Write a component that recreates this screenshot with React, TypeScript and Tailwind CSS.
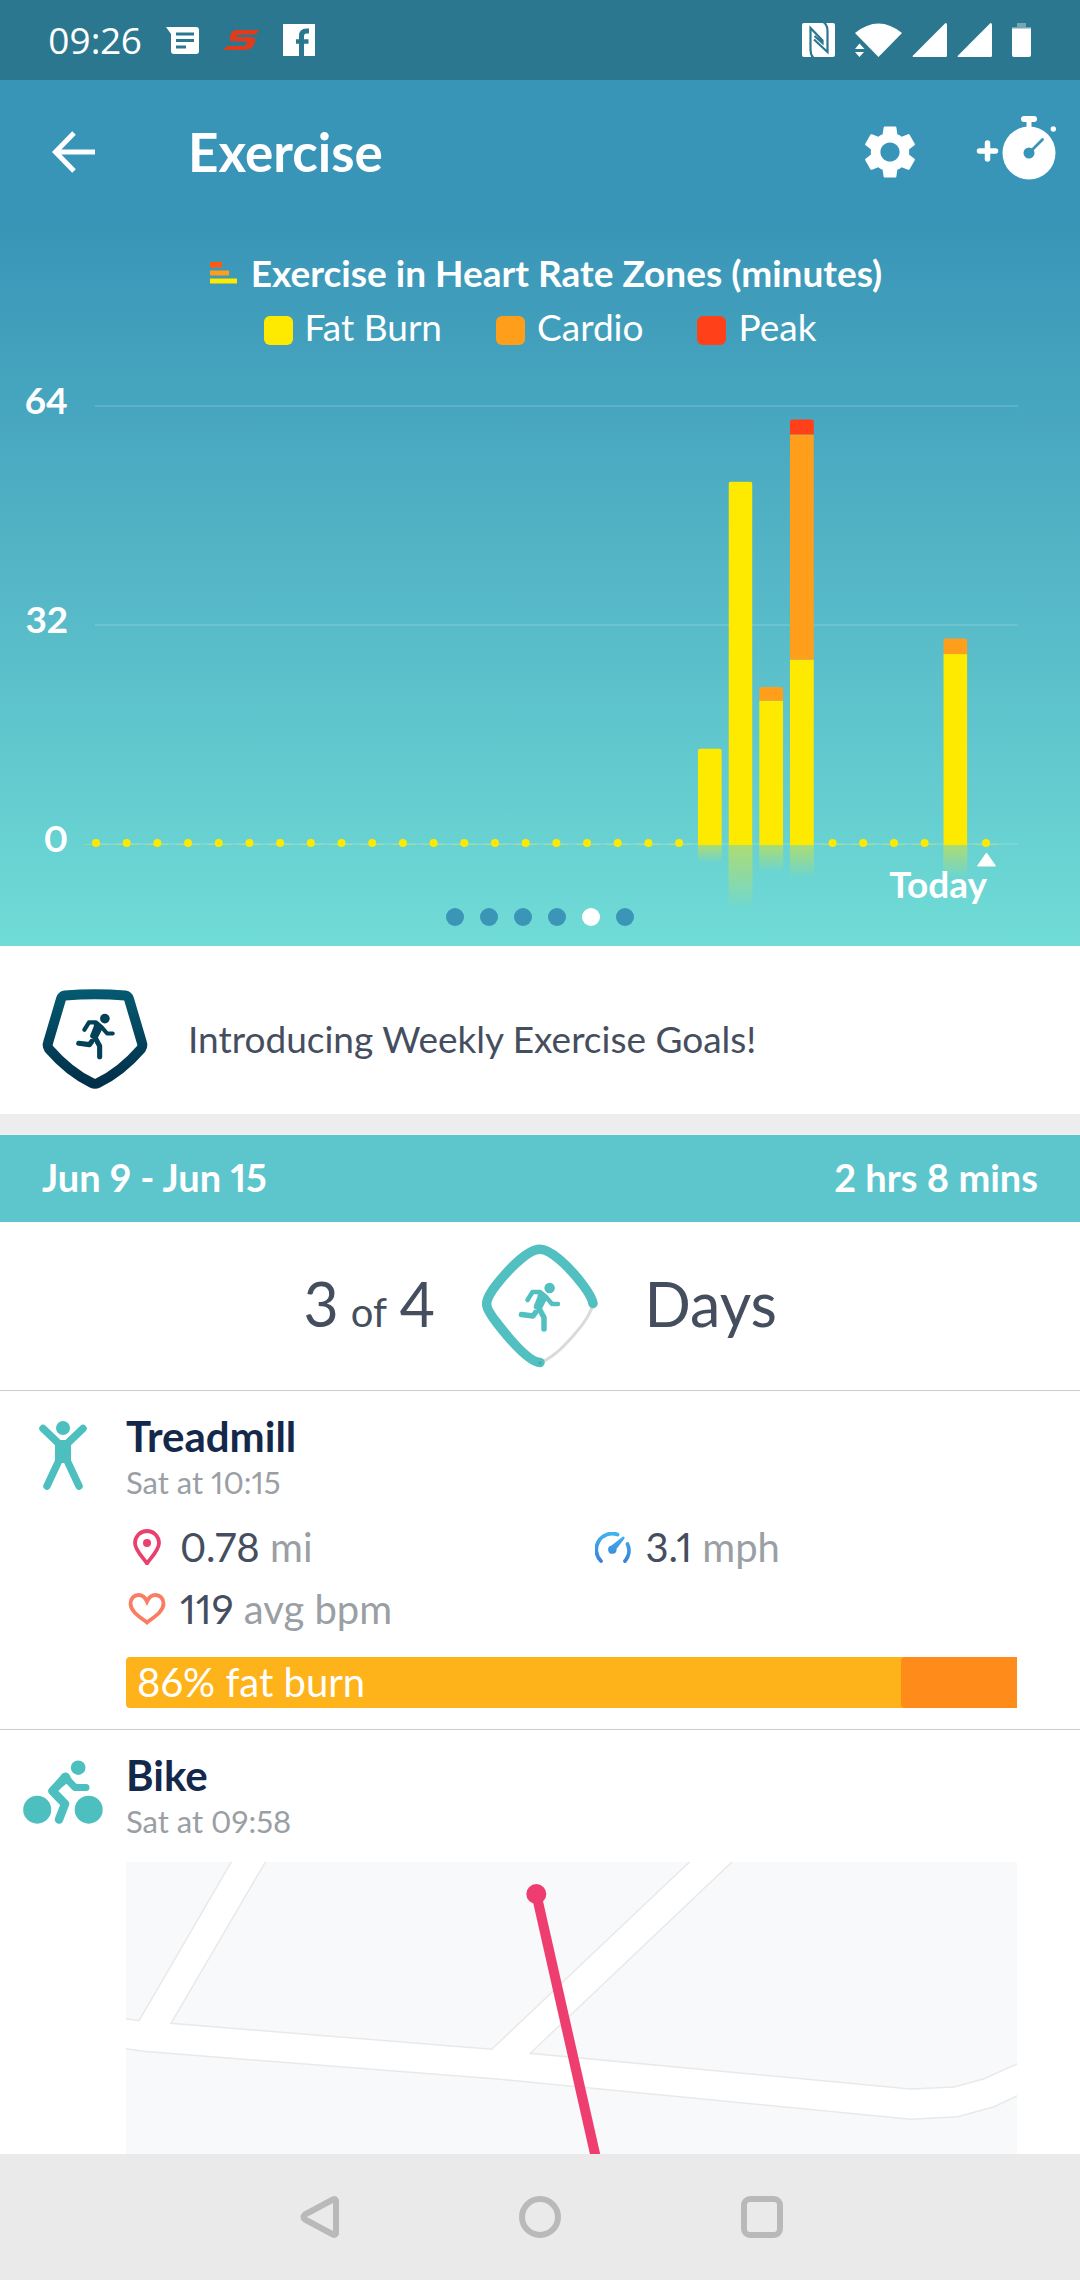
import type { ReactNode } from 'react';
import { MdSettings } from 'react-icons/md';

type Zone = 'fatBurn' | 'cardio' | 'peak';

const ZONES: { key: Zone; label: string; swatch: string; fill: string }[] = [
  { key: 'fatBurn', label: 'Fat Burn', swatch: 'bg-[#fee900]', fill: '#fee900' },
  { key: 'cardio', label: 'Cardio', swatch: 'bg-[#ff9e1b]', fill: '#ff9e1b' },
  { key: 'peak', label: 'Peak', swatch: 'bg-[#ff4019]', fill: '#ff4019' },
];

const DAY_COUNT = 30;

// minutes per zone, keyed by day index (last one is today)
const DAYS: Record<number, { fatBurn: number; cardio?: number; peak?: number; reflection: number }> = {
  20: { fatBurn: 14.1, reflection: 18 },
  21: { fatBurn: 53.1, reflection: 66 },
  22: { fatBurn: 21.1, cardio: 2, reflection: 27 },
  23: { fatBurn: 27.1, cardio: 32.9, peak: 2.2, reflection: 33 },
  28: { fatBurn: 27.9, cardio: 2.3, reflection: 33 },
};

export default function App() {
  return (
    <div className="flex min-h-screen flex-col bg-white font-['Lato',sans-serif] text-[#454e5e] proportional-nums">
      <header className="bg-[#3995b7]">
        <StatusBar />
        <Toolbar />
      </header>
      <main className="grow">
        <ZonesCard />
        <a href="#goals" className="flex h-42 items-center gap-10 px-[42px] pt-[18px]">
          <ShieldIcon />
          <span className="text-[37px] leading-12">Introducing Weekly Exercise Goals!</span>
        </a>
        <section>
          <div className="flex h-[108px] items-center justify-between border-t-[21px] border-[#ededed] bg-[#5dc5cc] px-[42px] pb-1 text-[38px] leading-12 font-bold text-white">
            <h2>Jun 9 - Jun 15</h2>
            <span>2 hrs 8 mins</span>
          </div>
          <div className="grid h-[169px] grid-cols-[1fr_auto_1fr] items-center gap-[46px] border-b border-[#cdcdcd] text-[61px] leading-16">
            <p className="flex items-baseline justify-end gap-3 pb-1">
              <span>3</span>
              <span className="text-[40px] leading-none">of</span>
              <span>4</span>
            </p>
            <GoalIcon />
            <p className="pb-1">Days</p>
          </div>
        </section>
        <Activity icon={<PersonIcon />} title="Treadmill" time="Sat at 10:15">
          <div className="grid grid-cols-2 gap-x-10 gap-y-3.5">
            <Metric icon={<PinIcon />} value="0.78" unit="mi" />
            <Metric icon={<GaugeIcon />} value="3.1" unit="mph" />
            <Metric icon={<HeartIcon />} value="119" unit="avg bpm" />
          </div>
          <div className="mt-6 flex h-[51px] overflow-hidden rounded-l-sm bg-[#ffb31a]">
            <span className="grow pl-[11px] text-[40px] leading-[51px] text-white">86% fat burn</span>
            <span className="w-[13%] rounded-l-sm bg-[#ff8c1a]" />
          </div>
        </Activity>
        <Activity icon={<BikeIcon />} title="Bike" time="Sat at 09:58" last>
          <RouteMap />
        </Activity>
      </main>
      <SystemNav />
    </div>
  );
}

function StatusBar() {
  return (
    <div className="flex h-20 items-center justify-between bg-[#2c7790] pr-[49px] pl-12 text-white">
      <div className="flex items-center">
        <span className="font-['Open_Sans',sans-serif] text-[37px] leading-12">09:26</span>
        <svg className="ml-6 h-[27px] w-[33px]" viewBox="0 0 33 27" fill="currentColor">
          <path
            fillRule="evenodd"
            d="M0 0h30a3 3 0 0 1 3 3v21a3 3 0 0 1-3 3H8a3 3 0 0 1-3-3V7zM10 5.5v3h18v-3zM10 12v3h18v-3zM10 18.500v3h10v-3z"
          />
        </svg>
        <svg className="ml-6 h-5 w-9" viewBox="0 0 36 20" fill="#e23b1b">
          <path d="M12 0h24l-3 4.500H17.500q-4 0-5 2.500H24c8 0 10 2 7.500 6.500C29.500 18 26 20 21 20H0l4.500-4h14.500c4 0 7-4.500 3-4.500H10c-3 0-4-1.500-3-4.500C8 3 9 1.500 12 0z" />
        </svg>
        <svg className="ml-6 h-8 w-8" viewBox="0 0 32 32">
          <path fill="currentColor" d="M0 0h32v32H0z" />
          <path fill="none" stroke="#2c7790" strokeWidth="5" d="M18.500 32V12q0-5 5-5h2.500" />
          <path fill="none" stroke="#2c7790" strokeWidth="4.500" d="M13 17.500h12.500" />
        </svg>
      </div>
      <div className="flex items-center">
        <svg className="h-[34px] w-[33px]" viewBox="0 0 33 34">
          <rect width="33" height="34" rx="2" fill="currentColor" />
          <g fill="none" stroke="#2c7790" strokeWidth="2.200">
            <path d="M11.500 35q-3-3-3-8V5l12 12.500v2.500l-8-7" />
            <path d="M21.500 -1q4 3 4 9v21L12 16.500" />
          </g>
        </svg>
        <svg className="ml-5 h-[34px] w-[47px]" viewBox="0 0 47 34" fill="currentColor">
          <path d="M0 10Q23.500-9 47 10L23.500 34zM4.500 20.500l5 5.500H0zM0 29h9l-4.500 5z" />
        </svg>
        <SignalIcon />
        <SignalIcon />
        <svg className="ml-5 h-[34px] w-[19px]" viewBox="0 0 19 34" fill="currentColor">
          <path opacity=".35" d="M5 0h9v4h5v3H0V4h5z" />
          <path d="M0 5.500h19V32a2 2 0 0 1-2 2H2a2 2 0 0 1-2-2z" />
        </svg>
      </div>
    </div>
  );
}

function SignalIcon() {
  return (
    <svg className="ml-2.5 h-[34px] w-[35px]" viewBox="0 0 35 34" fill="currentColor">
      <path d="M33.500 0Q35 0 35 1.500V32.500Q35 34 33.500 34H1.500Q0 34 .8 32.800z" />
    </svg>
  );
}

function Toolbar() {
  return (
    <div className="flex h-36 items-center pr-6 pl-[52px] text-white">
      <button type="button" aria-label="Back">
        <svg className="h-[42px] w-11" viewBox="0 0 44 42" fill="none" stroke="currentColor" strokeWidth="5">
          <path d="M22 2L3.500 21 22 40M3.500 21H43" />
        </svg>
      </button>
      <h1 className="ml-[92px] grow text-[53px] leading-16 font-bold">Exercise</h1>
      <button type="button" aria-label="Settings">
        <MdSettings className="h-16 w-16" />
      </button>
      <button type="button" aria-label="Add exercise" className="ml-[54px]">
        <svg className="-mt-2 h-16 w-20" viewBox="0 0 80 64">
          <path d="M3.500 35h16M11.500 27v16" fill="none" stroke="currentColor" strokeWidth="5.500" strokeLinecap="round" />
          <g fill="currentColor">
            <rect x="45" y="0" width="16" height="6" rx="3" />
            <path d="M50.500 4h5v10h-5z" />
            <circle cx="53" cy="37" r="26.500" />
            <circle cx="77.300" cy="13" r="2.700" />
          </g>
          <circle cx="53" cy="37" r="5.500" fill="#3995b7" />
          <path d="M53 37l13.500-13.500" stroke="#3995b7" strokeWidth="2.800" strokeLinecap="round" />
        </svg>
      </button>
    </div>
  );
}

function ZonesCard() {
  return (
    <section className="bg-linear-to-b from-[#3995b7] via-[#55b7c7] to-[#70dcd6] pt-[25px] pb-5 text-white">
      <div className="flex items-center justify-center gap-3.5 pl-3">
        <svg className="h-[22px] w-[27px]" viewBox="0 0 27 22">
          <path fill="#ff5a10" d="M0 0h12v5.500H0z" />
          <path fill="#ff9e1b" d="M0 8.500h19v5H0z" />
          <path fill="#fee900" d="M0 16.500h27v5H0z" />
        </svg>
        <h2 className="text-[37px] leading-12 font-bold">Exercise in Heart Rate Zones (minutes)</h2>
      </div>
      <ul className="mt-1.5 flex justify-center gap-[54px] text-[37px] leading-12">
        {ZONES.map((zone) => (
          <li key={zone.key} className="flex items-center gap-3">
            <span className={`mt-1.5 size-[29px] rounded-md ${zone.swatch}`} />
            {zone.label}
          </li>
        ))}
      </ul>
      <ZonesChart />
      <div className="flex justify-center gap-4">
        {[0, 1, 2, 3, 4, 5].map((page) => (
          <button
            key={page}
            type="button"
            aria-label={`Page ${page + 1}`}
            className={`size-[18px] rounded-full ${page === 4 ? 'bg-white' : 'bg-[#3a95b7]'}`}
          />
        ))}
      </div>
    </section>
  );
}

function ZonesChart() {
  const base = 494;
  const scale = 438 / 64;

  return (
    <svg className="block w-full" viewBox="0 0 1080 557" role="img" aria-label="Minutes per day">
      <defs>
        <linearGradient id="reflection" x1="0" y1="0" x2="0" y2="1">
          <stop offset="0" stopColor="#fee900" stopOpacity=".45" />
          <stop offset="1" stopColor="#fee900" stopOpacity="0" />
        </linearGradient>
      </defs>
      {[64, 32, 0].map((tick) => (
        <g key={tick}>
          <path d={`M95 ${base - tick * scale - 1}H1018`} stroke="#fff" strokeOpacity=".13" strokeWidth="2" />
          <text x="68" y={base + 7 - tick * scale} textAnchor="end" fontSize="37" fontWeight="700" fill="#fff">
            {tick}
          </text>
        </g>
      ))}
      {Array.from({ length: DAY_COUNT }, (_, i) => {
        const x = 96 + i * 30.69;
        const day = DAYS[i];
        if (!day) {
          return (
            <g key={i} fill="#fee900">
              <rect x={x - 12} y={base - 1} width="24" height="1" opacity=".35" />
              <circle cx={x} cy={base - 2} r="4" />
            </g>
          );
        }
        const total = day.fatBurn + (day.cardio ?? 0) + (day.peak ?? 0);
        const top = base - total * scale;
        let y = base;
        return (
          <g key={i}>
            <clipPath id={`bar-${i}`}>
              <path d={`M${x - 12} ${base}V${top + 3}q0-3 3-3h18q3 0 3 3V${base}z`} />
            </clipPath>
            <g clipPath={`url(#bar-${i})`}>
              {ZONES.map((zone) => {
                const height = (day[zone.key] ?? 0) * scale;
                y -= height;
                return <rect key={zone.key} x={x - 12} y={y} width="24" height={height} fill={zone.fill} />;
              })}
            </g>
            <rect x={x - 12} y={base} width="24" height={day.reflection} fill="url(#reflection)" />
          </g>
        );
      })}
      <path d="M986.500 502l9 13h-18z" fill="#fff" stroke="#fff" strokeLinejoin="round" />
      <text x="987" y="547" textAnchor="end" fontSize="37" fontWeight="700" fill="#fff">
        Today
      </text>
    </svg>
  );
}

type ActivityProps = {
  icon: ReactNode;
  title: string;
  time: string;
  last?: boolean;
  children: ReactNode;
};

function Activity({ icon, title, time, last, children }: ActivityProps) {
  return (
    <article className={`flex pt-[21px] pr-[63px] ${last ? '' : 'border-b border-[#cdcdcd] pb-[21px]'}`}>
      <div className="flex w-[126px] shrink-0 justify-center pt-[9px]">{icon}</div>
      <div className="min-w-0 grow">
        <h3 className="text-[42px] leading-12 font-bold text-[#14284b]">{title}</h3>
        <p className="mt-0.5 mb-[21px] text-[31px] leading-10 text-[#9a9fa5]">{time}</p>
        {children}
      </div>
    </article>
  );
}

function Metric({ icon, value, unit }: { icon: ReactNode; value: string; unit: string }) {
  return (
    <div className="flex items-center text-[40px] leading-12">
      <span className="mr-3 flex w-[42px] justify-center">{icon}</span>
      <p>
        {value} <span className="text-[#9a9fa5]">{unit}</span>
      </p>
    </div>
  );
}

function Runner() {
  return (
    <g fill="none" stroke="currentColor" strokeWidth="5.500" strokeLinecap="round" strokeLinejoin="round">
      <circle cx="67.600" cy="44" r="5.200" fill="currentColor" stroke="none" />
      <path d="M45.500 56l5-8h7.500l6 5 6 7h6" strokeWidth="4.500" />
      <path d="M58.500 50.500l4 3.500-5 9.500-3-1 4-10z" fill="currentColor" />
      <path d="M56.500 63.500l5.500 10v11.500" />
      <path d="M39.500 70.500l11.500 1.500 2.500-3.500" />
    </g>
  );
}

function ShieldIcon() {
  return (
    <svg className="h-[100px] w-[106px] text-[#034159]" viewBox="0 0 106 100">
      <defs>
        <linearGradient id="shield" x1="0" y1="0" x2="0" y2="1">
          <stop offset="0" stopColor="#04586f" />
          <stop offset="1" stopColor="#022f49" />
        </linearGradient>
      </defs>
      <path
        d="M23 6.500Q53 4 83 6.500Q86 7 87 10L100 54Q101 57 99 60Q79 83 56 94Q53 95.500 50 94Q27 83 7 60Q5 57 6 54L19 10Q20 7 23 6.500z"
        fill="none"
        stroke="url(#shield)"
        strokeWidth="10"
      />
      <g transform="translate(0 -11.300) scale(.93)">
        <Runner />
      </g>
    </svg>
  );
}

function GoalIcon() {
  return (
    <svg className="h-[124px] w-[117px] text-[#52bfc0]" viewBox="0 0 117 124">
      <path d="M111 60Q108 73 91 92Q72 114 58 118.500" fill="none" stroke="#dadada" strokeWidth="3" />
      <path
        d="M58 118.500C48 118 32 101 15 79Q4.600 66 4.600 60Q4.600 53 15 40C32 19 48 5.300 58 5.300C68 5.300 86 21 101 41Q110 53 111 59.500"
        fill="none"
        stroke="currentColor"
        strokeWidth="9.500"
        strokeLinecap="round"
      />
      <circle cx="58" cy="119" r="1.500" fill="#45aaac" />
      <Runner />
    </svg>
  );
}

function PersonIcon() {
  return (
    <svg className="h-[69px] w-12 text-[#4ebfbf]" viewBox="0 0 48 69">
      <circle cx="24" cy="7" r="7" fill="currentColor" />
      <path d="M16 22l4-3h8l4 3v20H16z" fill="currentColor" />
      <g fill="none" stroke="currentColor" strokeWidth="7.500" strokeLinecap="round" strokeLinejoin="round">
        <path d="M4 7.500l15.700 15V40L8 65" />
        <path d="M44 7.500l-15.700 15V40L40 65" />
      </g>
    </svg>
  );
}

function BikeIcon() {
  return (
    <svg className="h-16 w-20 text-[#4ebfbf]" viewBox="0 0 80 64">
      <g fill="currentColor">
        <circle cx="14.200" cy="49.700" r="14" />
        <circle cx="65.700" cy="49.700" r="14" />
        <circle cx="55.200" cy="7.700" r="7.300" />
        <path d="M25.500 31L39 14q4-3 7 0l3 6-10 7z" />
      </g>
      <g fill="none" stroke="currentColor" strokeLinecap="round" strokeLinejoin="round">
        <path d="M63 27.500H52L42.500 17.500" strokeWidth="7" />
        <path d="M42.500 17L29.500 31l12.500 13-6 15.500" strokeWidth="8.500" />
      </g>
    </svg>
  );
}

function PinIcon() {
  return (
    <svg className="h-9 w-7 text-[#e9406f]" viewBox="0 0 28 36">
      <path
        d="M14 34.500C11 29.500 2 21.500 2 14a12 12 0 0 1 24 0c0 7.500-9 15.500-12 20.500z"
        fill="none"
        stroke="currentColor"
        strokeWidth="3.800"
      />
      <circle cx="14" cy="14" r="4" fill="currentColor" />
    </svg>
  );
}

function HeartIcon() {
  return (
    <svg className="h-8 w-[38px]" viewBox="0 0 38 32">
      <path
        d="M19 29.500C12 24 2.500 18.500 2.500 10.500C2.500 5.500 6 2 10.500 2C14.500 2 17 4 19 8.500C21 4 23.500 2 27.500 2C32 2 35.500 5.500 35.500 10.500C35.500 18.500 26 24 19 29.500z"
        fill="none"
        stroke="#fa7c62"
        strokeWidth="3.800"
      />
    </svg>
  );
}

function GaugeIcon() {
  return (
    <svg className="h-[31px] w-9" viewBox="0 0 36 31">
      <defs>
        <linearGradient id="gauge" gradientUnits="userSpaceOnUse" x1="0" y1="0" x2="0" y2="31">
          <stop offset="0" stopColor="#40b4f0" />
          <stop offset="1" stopColor="#3b7fd6" />
        </linearGradient>
      </defs>
      <g fill="none" stroke="url(#gauge)" strokeWidth="3.800" strokeLinecap="round">
        <path d="M6 29A16 16 0 0 1 22.500 2.500" />
        <path d="M32.500 12A16 16 0 0 1 30 29" />
      </g>
      <path d="M28 4.500q2 0 1.500 2L21.500 17a4.200 4.200 0 1 1-5-3.500z" fill="url(#gauge)" />
    </svg>
  );
}

function RouteMap() {
  return (
    <svg className="block w-full bg-white" viewBox="0 0 891 292" role="img" aria-label="Bike route">
      <g fill="#f8f9fb" stroke="#e9e9ea" strokeWidth="1.500">
        <path d="M-2-2H106.500L13 158.700L-2 156.500z" />
        <path d="M140.600-2H565.500L365.700 187.300L45 161.300z" />
        <path d="M608-2H895V200L857.500 217L828 225L784.700 227L404.300 191.300z" />
        <path d="M-2 186.500L17 189.300L374 217.300L784.700 257.300L832 254.700L868 244.700L895 232V295H-2z" />
      </g>
      <path d="M410.300 32L469.500 294" stroke="#ee3d6f" strokeWidth="10" />
      <circle cx="410.300" cy="32" r="10" fill="#ee3d6f" />
    </svg>
  );
}

function SystemNav() {
  return (
    <nav className="flex h-[126px] items-center justify-center gap-[180px] bg-[#eaeaea] text-[#b9b9b9]">
      <button type="button" aria-label="Back">
        <NavGlyph>
          <path d="M39 4.500v33q-1 2-3 1L8 23.500q-3-2.500 0-5L36 3.500q2-1 3 1z" />
        </NavGlyph>
      </button>
      <button type="button" aria-label="Home">
        <NavGlyph>
          <circle cx="21" cy="21" r="18" />
        </NavGlyph>
      </button>
      <button type="button" aria-label="Overview">
        <NavGlyph>
          <rect x="3" y="3" width="36" height="36" rx="6" />
        </NavGlyph>
      </button>
    </nav>
  );
}

function NavGlyph({ children }: { children: ReactNode }) {
  return (
    <svg className="size-[42px]" viewBox="0 0 42 42" fill="none" stroke="currentColor" strokeWidth="6" strokeLinejoin="round">
      {children}
    </svg>
  );
}
